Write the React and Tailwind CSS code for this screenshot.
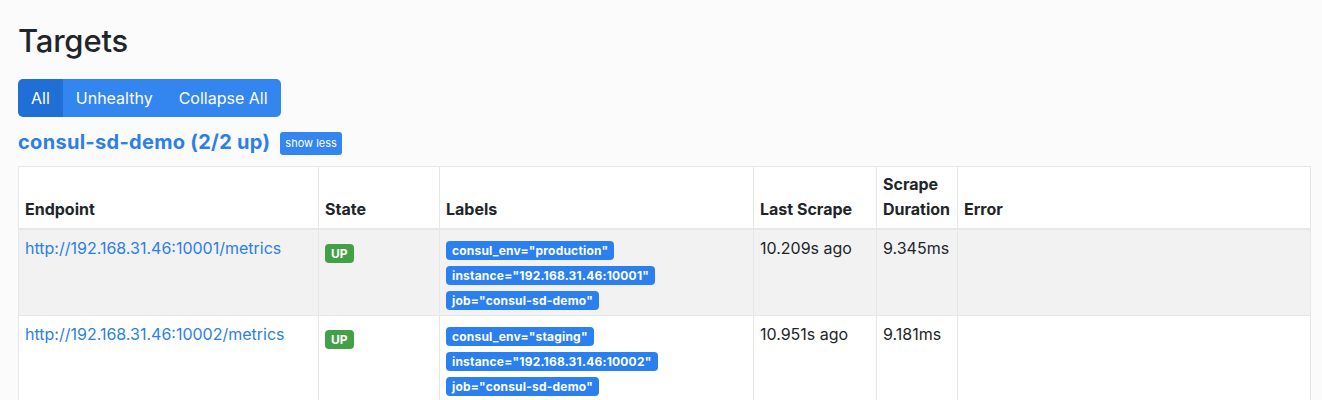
import React from "react";

const targets = [
  {
    endpoint: "http://192.168.31.46:10001/metrics",
    labels: ['consul_env="production"', 'instance="192.168.31.46:10001"', 'job="consul-sd-demo"'],
    lastScrape: "10.209s ago",
    duration: "9.345ms",
  },
  {
    endpoint: "http://192.168.31.46:10002/metrics",
    labels: ['consul_env="staging"', 'instance="192.168.31.46:10002"', 'job="consul-sd-demo"'],
    lastScrape: "10.951s ago",
    duration: "9.181ms",
  },
];

const cell = "border border-[#e6e7e9] px-[6px] align-top";
const head = "border border-[#e6e7e9] px-[6px] pt-[5px] pb-[6px] align-bottom text-left font-bold leading-[25px]";

const App = () => {
  return (
    <div className="min-h-[400px] bg-[#fbfbfc] pl-[18px] pr-[11px] pt-[22px] text-[16px] text-[#212529] font-['Inter','Liberation_Sans',sans-serif]">
      <h2 className="text-[31px] font-medium leading-[38px] tracking-[-0.2px]">Targets</h2>

      <div className="mt-[19px] inline-flex overflow-hidden rounded-[5px] text-white leading-[24px]">
        <button className="bg-[#1f6fd6] px-[13px] py-[7px]">All</button>
        <button className="bg-[#3385ef] px-[13px] py-[7px]">Unhealthy</button>
        <button className="bg-[#3385ef] px-[13px] py-[7px]">Collapse All</button>
      </div>

      <div className="mt-[12px] flex items-center gap-[10px]">
        <a className="text-[20px] font-bold tracking-[0.3px] text-[#2b7fe6] leading-[24px]">consul-sd-demo (2/2 up)</a>
        <button className="mt-[3px] rounded-[3px] bg-[#3385ef] px-[5px] py-[3px] text-[11px] leading-[17px] text-white">
          show less
        </button>
      </div>

      <table className="mt-[11px] w-[1293px] table-fixed border-collapse bg-white">
        <colgroup>
          <col className="w-[300px]" />
          <col className="w-[121px]" />
          <col className="w-[314px]" />
          <col className="w-[123px]" />
          <col className="w-[81px]" />
          <col />
        </colgroup>
        <thead>
          <tr className="border-b-2 border-[#e6e7e9]">
            <th className={head}>Endpoint</th>
            <th className={head}>State</th>
            <th className={head}>Labels</th>
            <th className={head}>Last Scrape</th>
            <th className={head}>Scrape Duration</th>
            <th className={head}>Error</th>
          </tr>
        </thead>
        <tbody>
          {targets.map((t, i) => (
            <tr key={t.endpoint} className={i % 2 === 0 ? "bg-[#f2f2f3]" : "bg-white"}>
              <td className={`${cell} pt-[6px] pb-[5px] leading-[24px]`}>
                <a className="text-[#2b7fe6]">{t.endpoint}</a>
              </td>
              <td className={`${cell} pt-[10px]`}>
                <span className="inline-block rounded-[4px] bg-[#43a047] px-[6px] text-[12px] font-bold leading-[19px] text-white">
                  UP
                </span>
              </td>
              <td className={`${cell} pt-[11px] pb-[5px]`}>
                <div className="flex flex-col items-start gap-[6px]">
                  {t.labels.map((l) => (
                    <span
                      key={l}
                      className="inline-block rounded-[4px] bg-[#2b7fef] px-[6px] text-[12px] font-bold leading-[19px] tracking-[0.2px] text-white"
                    >
                      {l}
                    </span>
                  ))}
                </div>
              </td>
              <td className={`${cell} pt-[6px] leading-[24px]`}>{t.lastScrape}</td>
              <td className={`${cell} pt-[6px] leading-[24px]`}>{t.duration}</td>
              <td className={cell}></td>
            </tr>
          ))}
        </tbody>
      </table>
    </div>
  );
};

export default App;
